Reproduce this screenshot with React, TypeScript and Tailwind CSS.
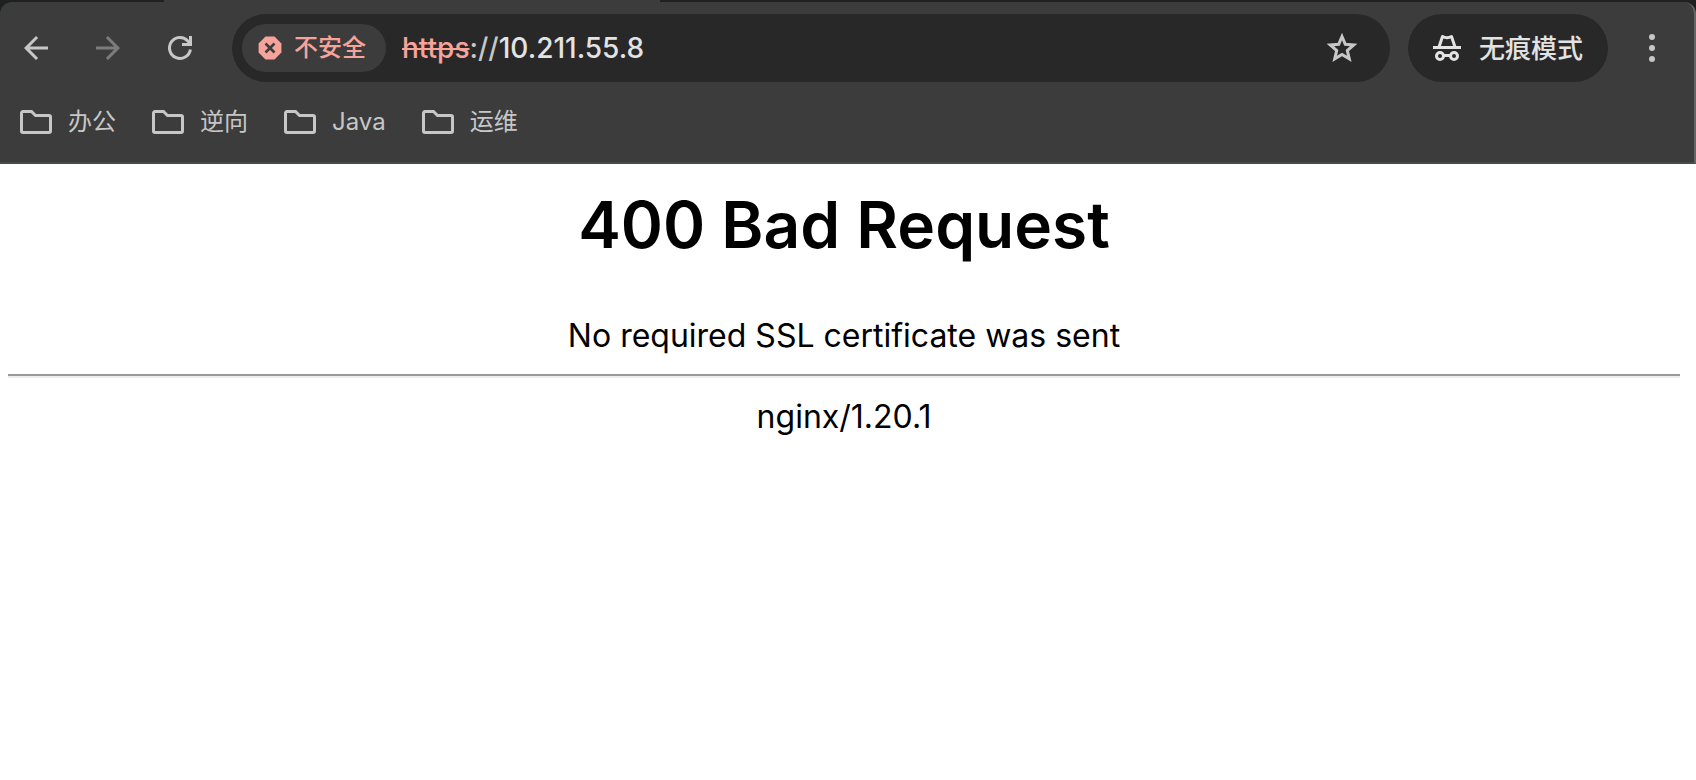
import React from 'react';

const bookmarks = ['办公', '逆向', 'Java', '运维'];

function ArrowIcon({ forward = false }: { forward?: boolean }) {
  return (
    <svg
      viewBox="0 0 24 24"
      className={`size-9 ${forward ? 'rotate-180 fill-[#7c7c7c]' : 'fill-[#c7c7c7]'}`}
      aria-hidden="true"
    >
      <path d="M20 11H7.83l5.59-5.59L12 4l-8 8 8 8 1.41-1.41L7.83 13H20v-2z" />
    </svg>
  );
}

function ReloadIcon() {
  return (
    <svg viewBox="0 0 36 36" className="size-9 fill-none stroke-[#c7c7c7]" strokeWidth="3" aria-hidden="true">
      <path d="M28.4 19.5A10.5 10.5 0 1 1 25.8 10.9l2 2.6" />
      <path d="M28.5 6v8.5H20" />
    </svg>
  );
}

function UnsafeIcon() {
  return (
    <svg viewBox="0 0 24 24" className="size-6 shrink-0" aria-hidden="true">
      <path d="M7.5.6h9l6.9 6.9v9l-6.9 6.9h-9L.6 16.5v-9z" fill="#f5a39b" />
      <path d="M7.5 7.5l9 9M16.5 7.5l-9 9" stroke="#3c3c3c" strokeWidth="2.6" />
    </svg>
  );
}

function StarIcon() {
  return (
    <svg
      viewBox="0 0 36 36"
      className="size-9 fill-none stroke-[#c7c7c7]"
      strokeWidth="3"
      strokeLinejoin="miter"
      aria-hidden="true"
    >
      <path d="M18 6.500l3.300 7.800 8.400.700-6.400 5.500 2 8.300-7.300-4.400-7.300 4.400 2-8.300L6.300 15l8.400-.700z" />
    </svg>
  );
}

function IncognitoIcon() {
  return (
    <svg viewBox="0 0 28 28" className="size-7 fill-none stroke-[#e3e3e3]" aria-hidden="true">
      <path d="M0 13.5h28" strokeWidth="3" />
      <path d="M6 13l3.500-10.500q4.500 2.500 9 0L22 13" strokeWidth="3" strokeLinejoin="round" />
      <circle cx="7" cy="22" r="3.5" strokeWidth="3" />
      <circle cx="21" cy="22" r="3.5" strokeWidth="3" />
      <path d="M10.5 21.500h7" strokeWidth="3" />
    </svg>
  );
}

function FolderIcon() {
  return (
    <svg viewBox="0 0 32 24" className="h-6 w-8 fill-none stroke-[#c7c7c7]" strokeWidth="3" aria-hidden="true">
      <path d="M3 1.5h8.500l4 4H29A1.500 1.500 0 0 1 30.500 7v14a1.500 1.500 0 0 1-1.500 1.500H3A1.500 1.500 0 0 1 1.500 21V3A1.500 1.500 0 0 1 3 1.500z" />
    </svg>
  );
}

function Toolbar() {
  return (
    <div className="flex h-[92px] items-center pl-[18px] pr-6">
      <div className="flex items-center gap-9">
        <button type="button" aria-label="返回">
          <ArrowIcon />
        </button>
        <button type="button" aria-label="前进" disabled>
          <ArrowIcon forward />
        </button>
        <button type="button" aria-label="重新加载">
          <ReloadIcon />
        </button>
      </div>

      {/* Address bar */}
      <div className="ml-[34px] flex h-[68px] flex-1 items-center rounded-full bg-[#282828] pl-2.5 pr-[30px]">
        <button
          type="button"
          className="flex h-12 items-center gap-3 rounded-full bg-[#3c3c3c] pl-4 pr-5 text-2xl font-medium text-[#f5a39b]"
        >
          <UnsafeIcon />
          不安全
        </button>
        <div className="ml-4 flex-1 text-[28px] font-medium leading-9 text-[#e3e3e3]">
          <span className="text-[#f5a39b] line-through">https</span>
          <span className="text-[#c7c7c7]">://</span>10.211.55.8
        </div>
        <button type="button" aria-label="为此标签页添加书签">
          <StarIcon />
        </button>
      </div>

      <button
        type="button"
        className="ml-[18px] flex h-[68px] items-center gap-[18px] rounded-full bg-[#282828] px-[25px] text-[26px] font-medium text-[#e3e3e3]"
      >
        <IncognitoIcon />
        无痕模式
      </button>
      <button type="button" aria-label="菜单" className="ml-[26px]">
        <svg viewBox="0 0 36 36" className="size-9 fill-[#c7c7c7]" aria-hidden="true">
          <circle cx="18" cy="7" r="3" />
          <circle cx="18" cy="18" r="3" />
          <circle cx="18" cy="29" r="3" />
        </svg>
      </button>
    </div>
  );
}

function BookmarksBar() {
  return (
    <nav className="flex h-[68px] items-start gap-9 px-5 pt-2.5 text-2xl text-[#c7c7c7]">
      {bookmarks.map((name) => (
        <a key={name} href="#" className="flex h-9 items-center gap-4">
          <FolderIcon />
          {name}
        </a>
      ))}
    </nav>
  );
}

export default function App() {
  return (
    <div className="min-h-screen bg-white font-['Inter','Noto_Sans_CJK_SC',sans-serif]">
      <header className="bg-[#1f2120]">
        {/* Bottom edge of the tab strip */}
        <div className="flex h-0.5 pl-[164px]">
          <div className="w-[496px] bg-[#3c3c3c]" />
        </div>
        <div className="rounded-t-xl border-b-2 border-r-2 border-b-[#454b49] border-r-[#656565] bg-[#3c3c3c]">
          <Toolbar />
          <BookmarksBar />
        </div>
      </header>

      <main className="pl-2 pr-4 text-center text-black">
        <h1 className="pt-6 text-[64px] font-semibold leading-[74px]">400 Bad Request</h1>
        <p className="mt-[50px] text-[32px] leading-[48px]">No required SSL certificate was sent</p>
        <hr className="mt-3.5 h-1 border-b-2 border-t-2 border-b-[#eeeeee] border-t-[#9a9a9a]" />
        <p className="mt-[15px] text-[32px] leading-[48px]">nginx/1.20.1</p>
      </main>
    </div>
  );
}
